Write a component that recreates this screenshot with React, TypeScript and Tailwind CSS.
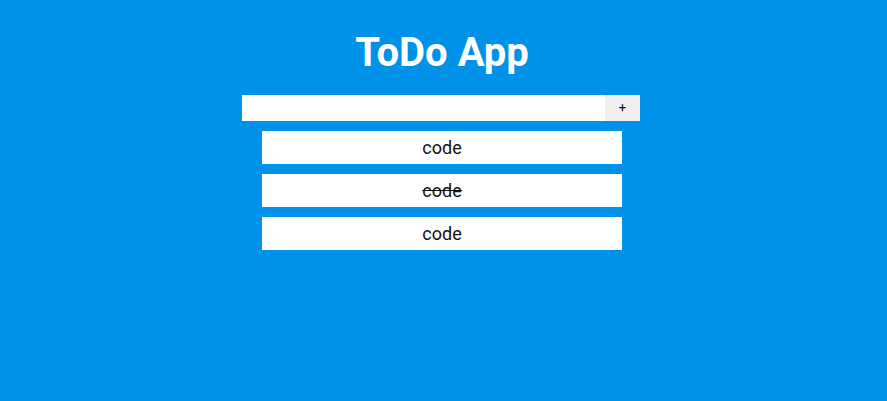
import React, { useState } from 'react';

interface Todo {
  id: number;
  text: string;
  done: boolean;
}

export default function App() {
  const [value, setValue] = useState('');
  const [todos, setTodos] = useState<Todo[]>([
    { id: 1, text: 'code', done: false },
    { id: 2, text: 'code', done: true },
    { id: 3, text: 'code', done: false },
  ]);

  const addTodo = () => {
    if (!value.trim()) return;
    setTodos([...todos, { id: Date.now(), text: value, done: false }]);
    setValue('');
  };

  const toggle = (id: number) =>
    setTodos(todos.map((t) => (t.id === id ? { ...t, done: !t.done } : t)));

  return (
    <div className="min-h-[401px] bg-[#0091e8] font-['Roboto',sans-serif] flex flex-col items-center">
      <h1 className="text-[40px] font-bold text-white leading-none mt-[33px] mr-[3px]">ToDo App</h1>

      {/* Input row */}
      <div className="flex w-[398px] h-[26px] mt-[22px] mr-[5px]">
        <input
          type="text"
          value={value}
          onChange={(e) => setValue(e.target.value)}
          className="flex-1 bg-white outline-none px-2 text-sm"
        />
        <button onClick={addTodo} className="w-[35px] bg-[#efefef] text-[13px] text-black">
          +
        </button>
      </div>

      {/* List */}
      <div className="flex flex-col gap-[10px] mt-[10px] mr-[3px]">
        {todos.map((todo) => (
          <div
            key={todo.id}
            onClick={() => toggle(todo.id)}
            className={`w-[360px] h-[33px] bg-white flex items-center justify-center text-[18px] text-[#111] cursor-pointer ${
              todo.done ? 'line-through' : ''
            }`}
          >
            {todo.text}
          </div>
        ))}
      </div>
    </div>
  );
}
